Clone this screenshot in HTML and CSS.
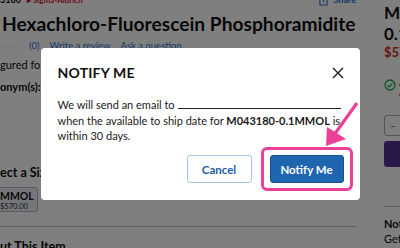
FILE: index.html
```html
<!DOCTYPE html>
<html lang="en">
<head>
<meta charset="utf-8">
<title>Notify Me</title>
<link rel="stylesheet" href="styles.css">
</head>
<body>
<div class="page">
  <main class="main">
    <div class="topline">
      <span class="sku">3180</span>
      <span class="brand">&#9656; Sigma-Aldrich</span>
      <span class="share"><svg class="share-icon" viewBox="0 0 10 12" width="9" height="11"><path d="M2 4H1v7h8V4H8M5 1v7M3 3l2-2 2 2" fill="none" stroke="#2a6fd0" stroke-width="1.2"/></svg>Share</span>
    </div>
    <h1 class="title">Hexachloro-Fluorescein Phosphoramidite</h1>
    <div class="ratings">
      <span class="stars">&#9734;&#9734;&#9734;</span>
      <span class="count">(0)</span>
      <a class="link">Write a review</a>
      <a class="link">Ask a question</a>
    </div>
    <p class="config">gured fo</p>
    <p class="syn">onym(s):</p>
    <p class="size-label">ect a Size</p>
    <div class="size-box">
      <span class="size-name">MMOL</span>
      <span class="size-price">$570.00</span>
    </div>
    <hr class="divider">
    <p class="about">ut This Item</p>
  </main>
  <aside class="side">
    <p class="side-sku">M0</p>
    <p class="side-size">0.1</p>
    <p class="side-price">$57</p>
    <div class="avail">
      <svg class="check" viewBox="0 0 12 12" width="12" height="12"><circle cx="6" cy="6" r="5" fill="none" stroke="#22a050" stroke-width="1.3"/><path d="M3.5 6.2l1.7 1.6 3.3-3.4" fill="none" stroke="#22a050" stroke-width="1.3"/></svg>
      <span class="avail-text">A<br>A</span>
    </div>
    <div class="qty"><span class="qty-minus">&minus;</span></div>
    <div class="cart"></div>
    <hr class="side-divider">
    <p class="side-note">Not</p>
    <p class="side-get">Get</p>
  </aside>
</div>

<div class="overlay">
  <div class="modal">
    <div class="modal-head">
      <h2 class="modal-title">NOTIFY ME</h2>
      <svg class="close" viewBox="0 0 12 12" width="12" height="12"><path d="M1 1l10 10M11 1L1 11" stroke="#1a1a1a" stroke-width="1.4" fill="none"/></svg>
    </div>
    <p class="modal-text">We will send an email to <span class="blank"></span><br>when the available to ship date for <b>M043180-0.1MMOL</b> is<br>within 30 days.</p>
    <div class="modal-actions">
      <button class="btn btn-cancel">Cancel</button>
      <span class="highlight"><button class="btn btn-primary">Notify Me</button></span>
    </div>
  </div>
  <svg class="arrow" viewBox="0 0 45 55" width="45" height="55"><path d="M37 8L14 40" stroke="#ec3f98" stroke-width="3.2" fill="none"/><path d="M7 32L6 51L26 44Z" fill="#ec3f98"/></svg>
</div>
</body>
</html>
```

FILE: styles.css
```css
* { box-sizing: border-box; }
html, body { margin: 0; padding: 0; }
body {
  width: 400px;
  height: 248px;
  overflow: hidden;
  position: relative;
  font-family: Lato, "Open Sans", Arial, sans-serif;
  background: #fff;
  color: #111;
}
p { margin: 0; }

.page {
  display: grid;
  grid-template-columns: 356px 1fr;
  column-gap: 28px;
  height: 248px;
  overflow: hidden;
  align-items: start;
}

.main { display: flex; flex-direction: column; }
.main > *, .side > * { flex-shrink: 0; }
.topline {
  display: flex;
  align-items: center;
  height: 10px;
  margin-top: -5px;
  font-size: 9px;
  line-height: 10px;
}
.sku { color: #111; font-weight: 700; }
.brand { color: #d0103a; font-weight: 700; margin-left: 6px; font-size: 8px; }
.share { margin-left: auto; color: #2a6fd0; font-weight: 700; display: flex; align-items: center; gap: 5px; font-size: 9px; }
.share-icon { display: block; }

.title {
  margin: 8px 0 0 2px;
  font-size: 19.2px;
  line-height: 22px;
  font-weight: 700;
  white-space: nowrap;
  color: #111;
}
.ratings {
  display: flex;
  align-items: center;
  height: 10px;
  margin-top: 6px;
  font-size: 9.5px;
  line-height: 10px;
}
.stars { color: #bdbdbd; font-size: 7px; }
.count { color: #2a6fd0; margin-left: 11px; }
.link { color: #2a6fd0; margin-left: 10px; }

.config { margin-top: 8px; font-size: 11px; line-height: 12px; }
.syn { margin-top: 10px; font-size: 11px; line-height: 12px; font-weight: 700; }
.size-label { margin-top: 73px; font-size: 12.5px; line-height: 14px; font-weight: 700; }
.size-box {
  margin-top: 7px;
  margin-left: -8px;
  width: 46px;
  height: 25px;
  border: 1px solid #aeb6c4;
  background: #e9edf3;
  border-radius: 3px;
  display: flex;
  flex-direction: column;
  padding-left: 7px;
  padding-top: 2px;
}
.size-name { font-size: 10.5px; font-weight: 700; line-height: 12px; }
.size-price { font-size: 7.5px; line-height: 9px; color: #333; }
.divider {
  margin: 14px 0 0 0;
  border: 0;
  border-top: 1px solid #bbb;
  height: 0;
}
.about { margin-top: 13px; font-size: 12.5px; line-height: 14px; font-weight: 700; }

.side { display: flex; flex-direction: column; white-space: nowrap; }
.side-sku { margin-top: 3px; font-size: 17px; line-height: 20px; font-weight: 700; }
.side-size { margin-top: 1px; font-size: 17px; line-height: 20px; font-weight: 700; }
.side-price { margin-top: 0; font-size: 13px; line-height: 16px; font-weight: 700; color: #d42a1a; }
.avail { display: flex; align-items: flex-start; gap: 3px; margin-top: 18px; }
.check { display: block; margin-top: 1px; }
.avail-text { font-size: 8px; line-height: 10px; }
.qty {
  margin-top: 17px;
  height: 21px;
  width: 30px;
  border: 1px solid #aaa;
  border-radius: 3px;
  display: flex;
  align-items: center;
  padding-left: 5px;
  font-size: 10px;
  color: #555;
}
.cart { margin-top: 5px; height: 26px; background: #503291; border-radius: 3px; }
.side-divider { margin: 39px 0 0 0; border: 0; border-top: 1px solid #bbb; height: 0; }
.side-note { margin-top: 10px; font-size: 11px; line-height: 13px; font-weight: 700; }
.side-get { margin-top: 2px; font-size: 11px; line-height: 13px; }

/* overlay + modal */
.overlay {
  position: absolute;
  inset: 0;
  background: rgba(0, 0, 0, 0.5);
  display: flex;
  align-items: center;
  justify-content: center;
}
.modal {
  width: 319px;
  height: 152px;
  background: #fff;
  border-radius: 4px;
  padding: 16px 16px 17px 17px;
  display: flex;
  flex-direction: column;
}
.modal-head {
  display: flex;
  justify-content: space-between;
  align-items: center;
  height: 18px;
}
.modal-title {
  margin: 0;
  font-size: 14px;
  line-height: 18px;
  font-weight: 700;
  letter-spacing: 0.2px;
  color: #111;
}
.close { display: block; }
.modal-text {
  margin-top: 15px;
  font-size: 11px;
  line-height: 15.5px;
  color: #1a1a1a;
  white-space: nowrap;
}
.modal-text b { font-weight: 700; }
.blank {
  display: inline-block;
  width: 163px;
  border-bottom: 1px solid #222;
  vertical-align: baseline;
  margin-left: 1px;
}
.modal-actions {
  margin-top: auto;
  display: flex;
  justify-content: flex-end;
  align-items: center;
  gap: 18px;
}
.btn {
  font-family: inherit;
  font-weight: 700;
  font-size: 11.5px;
  height: 28px;
  border-radius: 3px;
  cursor: pointer;
  padding: 0;
}
.btn-cancel {
  width: 65px;
  background: #fff;
  color: #1c5ea6;
  border: 1px solid #a9c5e6;
}
.btn-primary {
  width: 74px;
  background: #1f66b0;
  color: #fff;
  border: 1px solid #17528f;
  display: block;
}
.highlight { position: relative; display: block; }
.highlight::after {
  content: "";
  position: absolute;
  inset: -8px -9px -8px -9px;
  border: 3px solid #ec3f98;
  border-radius: 6px;
  pointer-events: none;
}
.arrow {
  position: absolute;
  left: 320px;
  top: 95px;
}
```
